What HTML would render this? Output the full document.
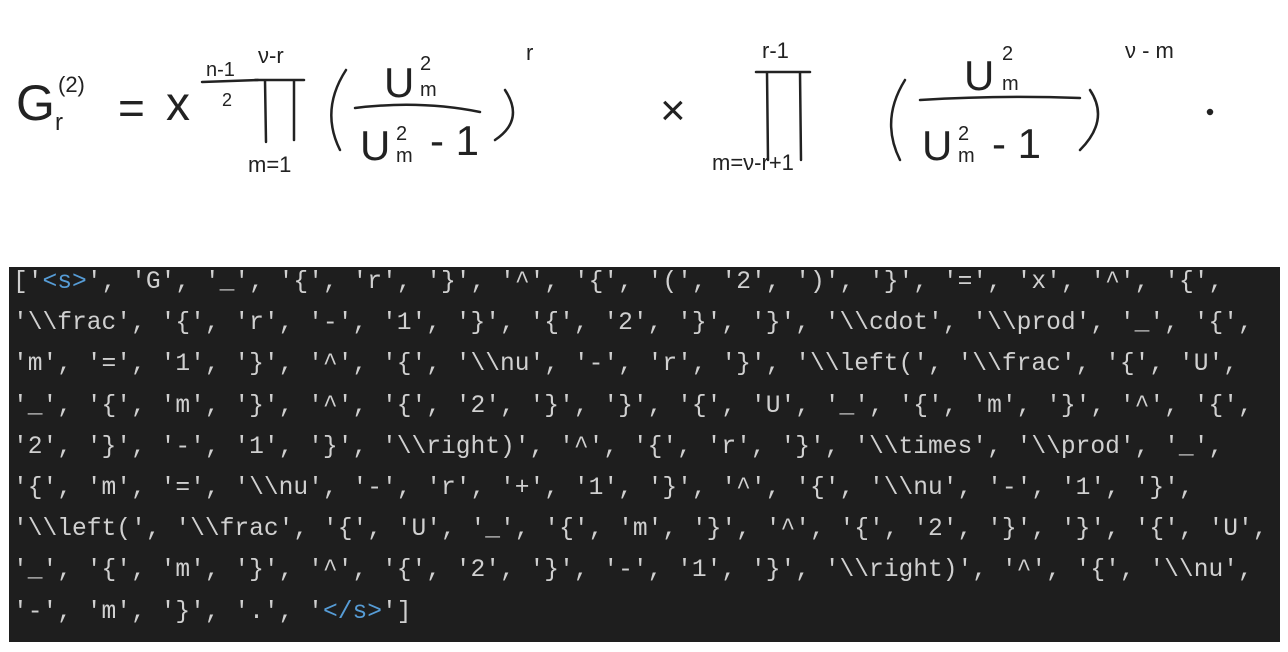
<!DOCTYPE html>
<html><head><meta charset="utf-8"><style>
body{margin:0;width:1288px;height:652px;background:#fff;overflow:hidden;position:relative}
#code{position:absolute;left:9px;top:267px;width:1271px;height:375px;background:#1e1e1e;}
#code pre{margin:0;padding:0 0 0 4px;font-family:"Liberation Mono",monospace;font-size:24.6px;line-height:41.2px;color:#d0d0d0;white-space:pre;position:relative;top:-5px}
.b{color:#569cd6}
svg text{font-family:"Liberation Sans",sans-serif;fill:#222}
</style></head><body>
<svg width="1288" height="260" style="position:absolute;left:0;top:0" stroke="#222" fill="none" stroke-width="2.5" stroke-linecap="round">
<text x="16" y="120" font-size="50" stroke="none">G</text>
<text x="55" y="130" font-size="24" stroke="none">r</text>
<text x="58" y="92" font-size="22" stroke="none">(2)</text>
<text x="118" y="124" font-size="46" stroke="none">=</text>
<text x="166" y="120" font-size="48" stroke="none">x</text>
<text x="206" y="76" font-size="20" stroke="none">n-1</text>
<path d="M202 82 L258 80"/>
<text x="222" y="106" font-size="18" stroke="none">2</text>
<path d="M255 80 L304 80 M265 80 L266 142 M294 80 L294 140"/>
<text x="258" y="63" font-size="22" stroke="none">ν-r</text>
<text x="248" y="172" font-size="22" stroke="none">m=1</text>
<path d="M346 70 Q320 110 340 150 M505 90 Q525 120 495 140"/>
<path d="M355 108 Q420 100 480 112"/>
<text x="384" y="97" font-size="42" stroke="none">U</text>
<text x="420" y="70" font-size="20" stroke="none">2</text>
<text x="420" y="96" font-size="20" stroke="none">m</text>
<text x="360" y="160" font-size="42" stroke="none">U</text>
<text x="396" y="140" font-size="20" stroke="none">2</text>
<text x="396" y="162" font-size="20" stroke="none">m</text>
<text x="430" y="155" font-size="42" stroke="none">- 1</text>
<text x="526" y="60" font-size="22" stroke="none">r</text>
<text x="660" y="125" font-size="44" stroke="none">×</text>
<path d="M756 72 L810 72 M767 72 L768 160 M800 72 L801 160"/>
<text x="762" y="58" font-size="22" stroke="none">r-1</text>
<text x="712" y="170" font-size="22" stroke="none">m=ν-r+1</text>
<path d="M905 80 Q880 120 900 160 M1090 90 Q1110 120 1080 150"/>
<path d="M920 100 Q1000 95 1080 98"/>
<text x="964" y="90" font-size="42" stroke="none">U</text>
<text x="1002" y="60" font-size="20" stroke="none">2</text>
<text x="1002" y="90" font-size="20" stroke="none">m</text>
<text x="922" y="160" font-size="42" stroke="none">U</text>
<text x="958" y="140" font-size="20" stroke="none">2</text>
<text x="958" y="162" font-size="20" stroke="none">m</text>
<text x="992" y="158" font-size="42" stroke="none">- 1</text>
<text x="1125" y="58" font-size="22" stroke="none">ν - m</text>
<circle cx="1210" cy="112" r="2" fill="#222"/>
</svg>
<div id="code"><pre>['<span class="b">&lt;s&gt;</span>', 'G', '_', '{', 'r', '}', '^', '{', '(', '2', ')', '}', '=', 'x', '^', '{',
'\\frac', '{', 'r', '-', '1', '}', '{', '2', '}', '}', '\\cdot', '\\prod', '_', '{',
'm', '=', '1', '}', '^', '{', '\\nu', '-', 'r', '}', '\\left(', '\\frac', '{', 'U',
'_', '{', 'm', '}', '^', '{', '2', '}', '}', '{', 'U', '_', '{', 'm', '}', '^', '{',
'2', '}', '-', '1', '}', '\\right)', '^', '{', 'r', '}', '\\times', '\\prod', '_',
'{', 'm', '=', '\\nu', '-', 'r', '+', '1', '}', '^', '{', '\\nu', '-', '1', '}',
'\\left(', '\\frac', '{', 'U', '_', '{', 'm', '}', '^', '{', '2', '}', '}', '{', 'U',
'_', '{', 'm', '}', '^', '{', '2', '}', '-', '1', '}', '\\right)', '^', '{', '\\nu',
'-', 'm', '}', '.', '<span class="b">&lt;/s&gt;</span>']</pre></div>
</body></html>
